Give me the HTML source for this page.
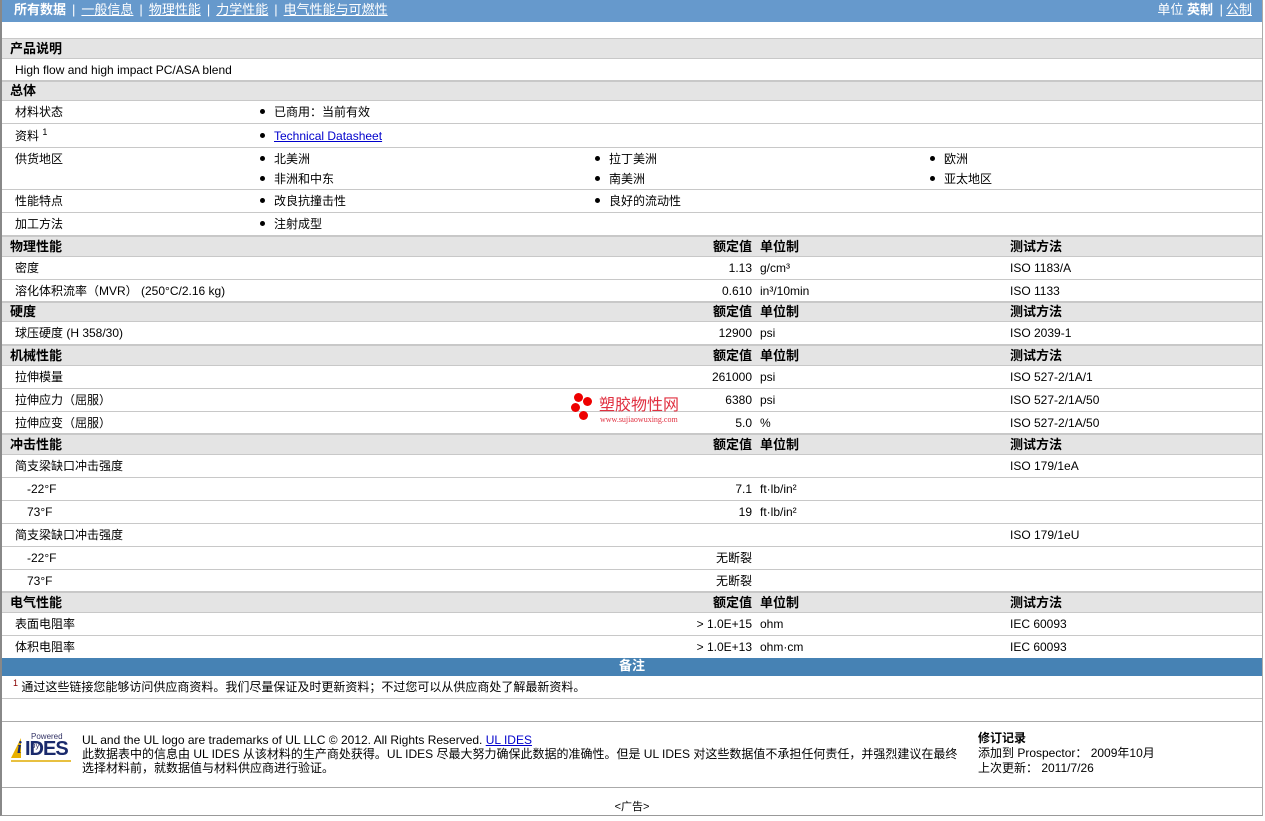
<!DOCTYPE html><html><head><meta charset="utf-8"><style>
*{margin:0;padding:0;box-sizing:border-box}
body{width:1265px;height:821px;overflow:hidden;background:#fff;font:12px "Liberation Sans","Noto Sans CJK SC",sans-serif;color:#000;position:relative}
#wrap{position:absolute;left:0;top:0;width:1263px;height:816px;border-left:2px solid #888;border-right:1px solid #aaa;border-bottom:1px solid #999}
.top{height:22px;background:#6699cc;color:#fff;font-size:13px;position:relative;line-height:20px}
.top .l{position:absolute;left:12px}
.top a{color:#fff;text-decoration:underline}
.top b{font-weight:bold}
.top .s{margin:0 6px}
.top .r{position:absolute;right:10px}
.r-{position:relative;border-bottom:1px solid #c8c8c8}
.h{background:#e4e4e4;font-weight:bold;font-size:13px;border-bottom:1px solid #c8c8c8;border-top:1px solid #c8c8c8}
.c{position:absolute;top:50%;transform:translateY(-50%);white-space:nowrap;line-height:14px}
.t1{top:4px;transform:none}
.t2{top:24px;transform:none}
sup{font-size:9px;line-height:0;vertical-align:5px}
.bul::before{content:"";display:inline-block;width:5px;height:5px;border-radius:50%;background:#000;margin:0 9px 2px 0;vertical-align:middle}
.v{right:510px;text-align:right}
a.lk{color:#00c;text-decoration:underline}
</style></head><body><div id="wrap">
<div class="top"><span class="l"><b>所有数据</b><span class="s">|</span><a>一般信息</a><span class="s">|</span><a>物理性能</a><span class="s">|</span><a>力学性能</a><span class="s">|</span><a>电气性能与可燃性</a></span><span class="r">单位 <b>英制</b> <span style="margin:0 3px">|</span><a>公制</a></span></div>
<div style="height:16px"></div>
<div class="r- h" style="height:21px"><span class="c" style="left:8px">产品说明</span></div>
<div class="r-" style="height:22px"><span class="c" style="left:13px">High flow and high impact PC/ASA blend</span></div>
<div class="r- h" style="height:20px"><span class="c" style="left:8px">总体</span></div>
<div class="r-" style="height:23px"><span class="c" style="left:13px">材料状态</span><span class="c bul" style="left:258px">已商用：当前有效</span></div>
<div class="r-" style="height:24px"><span class="c" style="left:13px">资料 <sup>1</sup></span><span class="c bul" style="left:258px"><a class="lk">Technical Datasheet</a></span></div>
<div class="r-" style="height:42px"><span class="c t1" style="left:13px">供货地区</span><span class="c t1 bul" style="left:258px">北美洲</span><span class="c t1 bul" style="left:593px">拉丁美洲</span><span class="c t1 bul" style="left:928px">欧洲</span><span class="c t2 bul" style="left:258px">非洲和中东</span><span class="c t2 bul" style="left:593px">南美洲</span><span class="c t2 bul" style="left:928px">亚太地区</span></div>
<div class="r-" style="height:23px"><span class="c" style="left:13px">性能特点</span><span class="c bul" style="left:258px">改良抗撞击性</span><span class="c bul" style="left:593px">良好的流动性</span></div>
<div class="r-" style="height:23px"><span class="c" style="left:13px">加工方法</span><span class="c bul" style="left:258px">注射成型</span></div>
<div class="r- h" style="height:21px"><span class="c" style="left:8px">物理性能</span><span class="c v">额定值</span><span class="c" style="left:758px">单位制</span><span class="c" style="left:1008px">测试方法</span></div>
<div class="r-" style="height:23px"><span class="c" style="left:13px">密度</span><span class="c v">1.13</span><span class="c" style="left:758px">g/cm³</span><span class="c" style="left:1008px">ISO 1183/A</span></div>
<div class="r-" style="height:22px"><span class="c" style="left:13px">溶化体积流率（MVR） (250°C/2.16 kg)</span><span class="c v">0.610</span><span class="c" style="left:758px">in³/10min</span><span class="c" style="left:1008px">ISO 1133</span></div>
<div class="r- h" style="height:20px"><span class="c" style="left:8px">硬度</span><span class="c v">额定值</span><span class="c" style="left:758px">单位制</span><span class="c" style="left:1008px">测试方法</span></div>
<div class="r-" style="height:23px"><span class="c" style="left:13px">球压硬度 (H 358/30)</span><span class="c v">12900</span><span class="c" style="left:758px">psi</span><span class="c" style="left:1008px">ISO 2039-1</span></div>
<div class="r- h" style="height:21px"><span class="c" style="left:8px">机械性能</span><span class="c v">额定值</span><span class="c" style="left:758px">单位制</span><span class="c" style="left:1008px">测试方法</span></div>
<div class="r-" style="height:23px"><span class="c" style="left:13px">拉伸模量</span><span class="c v">261000</span><span class="c" style="left:758px">psi</span><span class="c" style="left:1008px">ISO 527-2/1A/1</span></div>
<div class="r-" style="height:23px"><span class="c" style="left:13px">拉伸应力（屈服）</span><span class="c v">6380</span><span class="c" style="left:758px">psi</span><span class="c" style="left:1008px">ISO 527-2/1A/50</span></div>
<div class="r-" style="height:22px"><span class="c" style="left:13px">拉伸应变（屈服）</span><span class="c v">5.0</span><span class="c" style="left:758px">%</span><span class="c" style="left:1008px">ISO 527-2/1A/50</span></div>
<div class="r- h" style="height:21px"><span class="c" style="left:8px">冲击性能</span><span class="c v">额定值</span><span class="c" style="left:758px">单位制</span><span class="c" style="left:1008px">测试方法</span></div>
<div class="r-" style="height:23px"><span class="c" style="left:13px">简支梁缺口冲击强度</span><span class="c" style="left:1008px">ISO 179/1eA</span></div>
<div class="r-" style="height:23px"><span class="c" style="left:25px">-22°F</span><span class="c v">7.1</span><span class="c" style="left:758px">ft·lb/in²</span></div>
<div class="r-" style="height:23px"><span class="c" style="left:25px">73°F</span><span class="c v">19</span><span class="c" style="left:758px">ft·lb/in²</span></div>
<div class="r-" style="height:23px"><span class="c" style="left:13px">简支梁缺口冲击强度</span><span class="c" style="left:1008px">ISO 179/1eU</span></div>
<div class="r-" style="height:23px"><span class="c" style="left:25px">-22°F</span><span class="c v">无断裂</span></div>
<div class="r-" style="height:22px"><span class="c" style="left:25px">73°F</span><span class="c v">无断裂</span></div>
<div class="r- h" style="height:21px"><span class="c" style="left:8px">电气性能</span><span class="c v">额定值</span><span class="c" style="left:758px">单位制</span><span class="c" style="left:1008px">测试方法</span></div>
<div class="r-" style="height:23px"><span class="c" style="left:13px">表面电阻率</span><span class="c v">&gt; 1.0E+15</span><span class="c" style="left:758px">ohm</span><span class="c" style="left:1008px">IEC 60093</span></div>
<div class="r-" style="height:22px;border:0"><span class="c" style="left:13px">体积电阻率</span><span class="c v">&gt; 1.0E+13</span><span class="c" style="left:758px">ohm·cm</span><span class="c" style="left:1008px">IEC 60093</span></div>
<div style="height:18px;background:#4682b4;color:#fff;font-weight:bold;font-size:13px;text-align:center;line-height:16px">备注</div>
<div class="r-" style="height:23px"><span class="c" style="left:11px"><sup style="color:#800">1</sup> 通过这些链接您能够访问供应商资料。我们尽量保证及时更新资料；不过您可以从供应商处了解最新资料。</span></div>
<div style="height:23px;border-bottom:1px solid #aaa"></div>
<div style="height:66px;border-bottom:1px solid #aaa;position:relative">
<div style="position:absolute;left:7px;top:10px;width:62px;height:28px">
<div style="position:absolute;left:22px;top:0;font-size:8px;color:#336;line-height:9px">Powered by</div>
<div style="position:absolute;left:2px;top:6px;width:0;height:0;border-left:10px solid transparent;border-bottom:20px solid #e8b000"></div>
<div style="position:absolute;left:8px;top:6px;font:bold italic 17px/20px 'Liberation Serif',serif;color:#1a2a6c">i</div>
<div style="position:absolute;left:16px;top:6px;font:bold 20px/22px 'Liberation Sans',sans-serif;color:#1a2a6c;letter-spacing:-1px">IDES</div>
<div style="position:absolute;left:2px;top:28px;width:60px;height:2px;background:#e8c040"></div></div>
<div style="position:absolute;left:80px;top:11px;line-height:14px;width:882px">UL and the UL logo are trademarks of UL LLC © 2012. All Rights Reserved. <a class="lk">UL IDES</a><br>此数据表中的信息由 UL IDES 从该材料的生产商处获得。UL IDES 尽最大努力确保此数据的准确性。但是 UL IDES 对这些数据值不承担任何责任，并强烈建议在最终选择材料前，就数据值与材料供应商进行验证。</div>
<div style="position:absolute;left:976px;top:9px;line-height:15px"><b>修订记录</b><br>添加到 Prospector： 2009年10月<br>上次更新： 2011/7/26</div></div>
<div style="text-align:center;font-size:11px;padding-top:10px">&lt;广告&gt;</div>
</div>
<div style="position:absolute;left:571px;top:393px">
<span style="position:absolute;left:3px;top:0;width:9px;height:9px;border-radius:50%;background:#e00"></span>
<span style="position:absolute;left:12px;top:4px;width:9px;height:9px;border-radius:50%;background:#e00"></span>
<span style="position:absolute;left:0;top:10px;width:9px;height:9px;border-radius:50%;background:#e00"></span>
<span style="position:absolute;left:8px;top:18px;width:9px;height:9px;border-radius:50%;background:#e00"></span>
<span style="position:absolute;left:28px;top:4px;font-size:16px;line-height:18px;color:#e03040;white-space:nowrap">塑胶物性网</span>
<span style="position:absolute;left:29px;top:22px;font:8px/9px 'Liberation Serif',serif;color:#e03040;white-space:nowrap">www.sujiaowuxing.com</span></div>
</body></html>
